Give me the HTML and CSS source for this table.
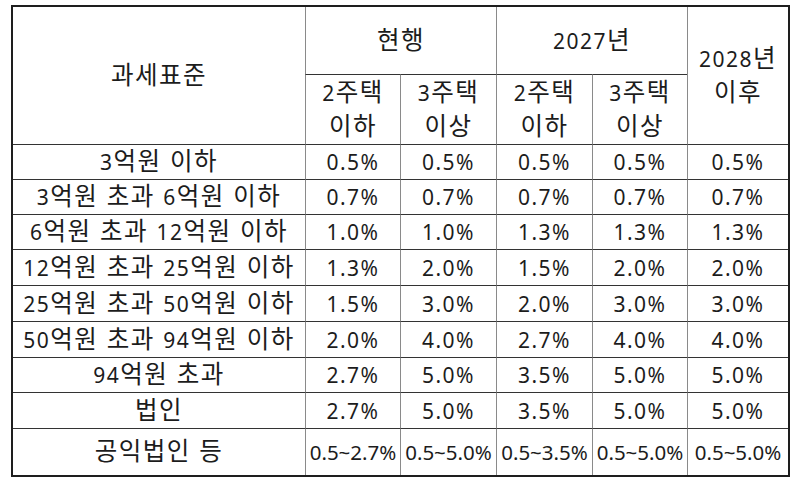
FILE: index.html
```html
<!DOCTYPE html>
<html lang="ko">
<head>
<meta charset="utf-8">
<title>과세표준</title>
<link rel="stylesheet" href="styles.css">
</head>
<body>
<table class="tax">
  <colgroup>
    <col class="c-base">
    <col class="c-95">
    <col class="c-96">
    <col class="c-96">
    <col class="c-95">
    <col class="c-last">
  </colgroup>
  <thead>
    <tr class="h1">
      <th rowspan="2" class="first"><span class="k">과세표준</span></th>
      <th colspan="2"><span class="k">현행</span></th>
      <th colspan="2">2027<span class="k">년</span></th>
      <th rowspan="2">2028<span class="k">년</span><br><span class="k">이후</span></th>
    </tr>
    <tr class="h2">
      <th>2<span class="k">주택</span><br><span class="k">이하</span></th>
      <th>3<span class="k">주택</span><br><span class="k">이상</span></th>
      <th>2<span class="k">주택</span><br><span class="k">이하</span></th>
      <th>3<span class="k">주택</span><br><span class="k">이상</span></th>
    </tr>
  </thead>
  <tbody>
    <tr class="r35"><td class="first">3<span class="k">억원 이하</span></td><td>0.5%</td><td>0.5%</td><td>0.5%</td><td>0.5%</td><td>0.5%</td></tr>
    <tr class="r35"><td class="first">3<span class="k">억원 초과 </span>6<span class="k">억원 이하</span></td><td>0.7%</td><td>0.7%</td><td>0.7%</td><td>0.7%</td><td>0.7%</td></tr>
    <tr class="r35"><td class="first">6<span class="k">억원 초과 </span>12<span class="k">억원 이하</span></td><td>1.0%</td><td>1.0%</td><td>1.3%</td><td>1.3%</td><td>1.3%</td></tr>
    <tr class="r36"><td class="first">12<span class="k">억원 초과 </span>25<span class="k">억원 이하</span></td><td>1.3%</td><td>2.0%</td><td>1.5%</td><td>2.0%</td><td>2.0%</td></tr>
    <tr class="r36"><td class="first">25<span class="k">억원 초과 </span>50<span class="k">억원 이하</span></td><td>1.5%</td><td>3.0%</td><td>2.0%</td><td>3.0%</td><td>3.0%</td></tr>
    <tr class="r36"><td class="first">50<span class="k">억원 초과 </span>94<span class="k">억원 이하</span></td><td>2.0%</td><td>4.0%</td><td>2.7%</td><td>4.0%</td><td>4.0%</td></tr>
    <tr class="r35"><td class="first">94<span class="k">억원 초과</span></td><td>2.7%</td><td>5.0%</td><td>3.5%</td><td>5.0%</td><td>5.0%</td></tr>
    <tr class="r36"><td class="first"><span class="k">법인</span></td><td>2.7%</td><td>5.0%</td><td>3.5%</td><td>5.0%</td><td>5.0%</td></tr>
    <tr class="r47 small"><td class="first"><span class="k">공익법인 등</span></td><td>0.5~2.7%</td><td>0.5~5.0%</td><td>0.5~3.5%</td><td>0.5~5.0%</td><td>0.5~5.0%</td></tr>
  </tbody>
</table>
</body>
</html>
```

FILE: styles.css
```css
html, body {
  margin: 0;
  padding: 0;
  background: #ffffff;
}

body {
  padding: 5px 0 0 11px;
  font-family: "Noto Sans", "Noto Sans CJK KR", sans-serif;
  color: #1c1c1c;
}

.tax {
  border-collapse: separate;
  border-spacing: 0;
  table-layout: fixed;
  width: 779px;
  border: 2px solid #1e1e1e;
  font-size: 21px;
  line-height: 34px;
  letter-spacing: 1.5px;
}

.c-base { width: 292px; }
.c-95 { width: 95px; }
.c-96 { width: 96px; }
.c-last { width: 101px; }

.tax th,
.tax td {
  padding: 0;
  font-weight: normal;
  text-align: center;
  vertical-align: middle;
  border-left: 1px solid #8a8a8a;
  border-top: 1px solid #333333;
  white-space: nowrap;
}

.tax .first {
  border-left: none;
}

.tax .h1 th {
  border-top: none;
}

.k {
  font-family: "Noto Sans CJK KR", sans-serif;
  font-size: 24.5px;
  letter-spacing: 1.5px;
  line-height: 0;
}

.h1 { height: 67px; }
.h2 { height: 70px; }
.r35 { height: 35px; }
.r36 { height: 36px; }
.r47 { height: 47px; }

.small td {
  font-size: 20.5px;
  letter-spacing: 0;
}
```
